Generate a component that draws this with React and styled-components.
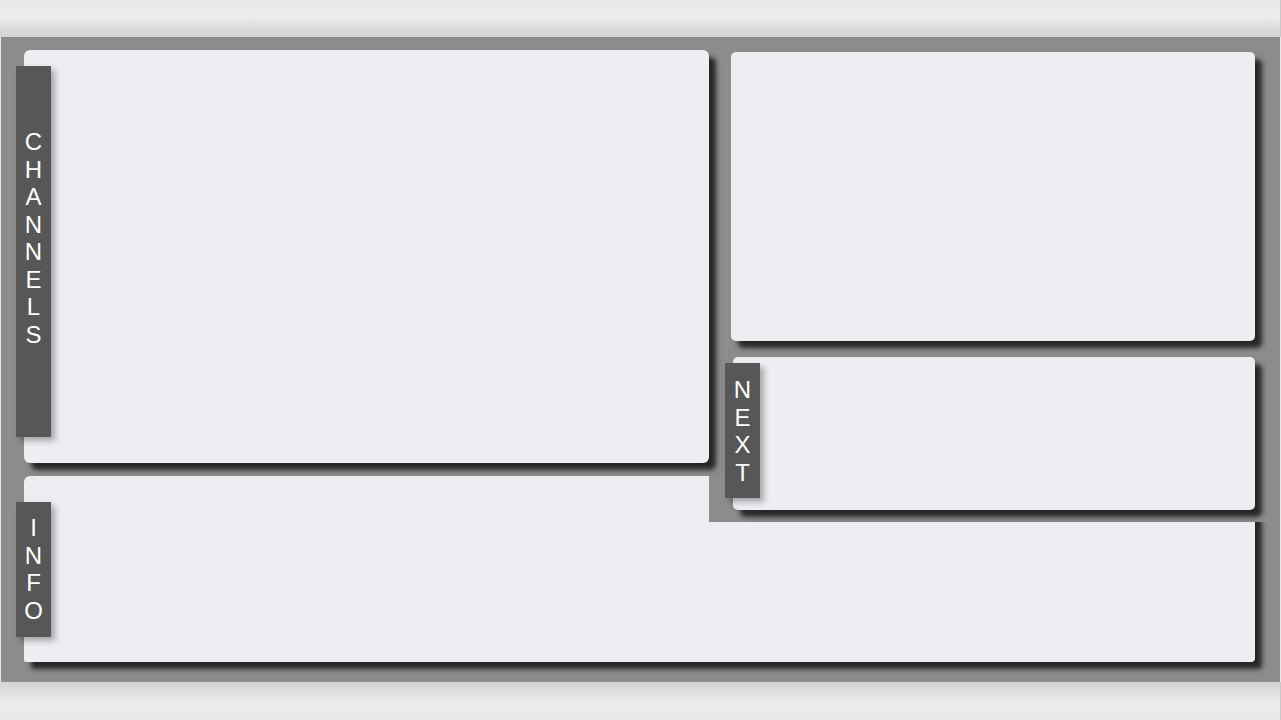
import styled, { createGlobalStyle } from 'styled-components';

const GlobalStyle = createGlobalStyle`
  html, body {
    margin: 0;
    padding: 0;
    background: #e9e9e9;
    font-family: "Liberation Sans", Arial, sans-serif;
  }
`;

function Label({ text, top, height, pad }) {
  return (
    <Tab $top={top} $height={height} $pad={pad}>
      {text.split('').map((ch, i) => (
        <Letter key={i}>{ch}</Letter>
      ))}
    </Tab>
  );
}

function App() {
  return (
    <Page>
      <GlobalStyle />
      <TopBar />
      <Main>
        <ChannelsPanel>
          <Label text="CHANNELS" top={16} height={371} pad={62} />
        </ChannelsPanel>
        <RightColumn>
          <PreviewPanel />
          <NextPanel>
            <Label text="NEXT" top={6} height={135} pad={13} />
          </NextPanel>
        </RightColumn>
        <InfoPanel>
          <Label text="INFO" top={26} height={135} pad={12} />
        </InfoPanel>
      </Main>
      <BottomBar />
    </Page>
  );
}

export default App;

const Page = styled.div`
  width: 1281px;
  height: 720px;
  display: flex;
  flex-direction: column;
  overflow: hidden;
`;
const TopBar = styled.div`
  height: 37px;
  flex-shrink: 0;
  background: linear-gradient(#e8e8e8, #ececec 45%, #d2d2d2);
  border-right: 1px solid #c8c8c8;
`;
const BottomBar = styled.div`
  height: 38px;
  flex-shrink: 0;
  background: linear-gradient(#d4d4d4, #ebebeb 55%, #e9e9e9);
  border-right: 1px solid #c8c8c8;
`;
const Main = styled.div`
  height: 645px;
  margin: 0 1px;
  padding: 13px 0 0 23px;
  box-sizing: border-box;
  background: #8c8c8c;
  display: grid;
  grid-template-columns: 685px 1fr;
  grid-template-rows: 413px 186px;
  row-gap: 13px;
`;
const Panel = styled.div`
  position: relative;
  background: #eeedf2;
  border-radius: 6px;
  box-shadow: 7px 7px 5px rgba(0, 0, 0, 0.72);
`;
const ChannelsPanel = styled(Panel)`
  grid-column: 1;
  grid-row: 1;
  z-index: 2;
`;
const RightColumn = styled.div`
  grid-column: 2;
  grid-row: 1 / 3;
  align-self: start;
  position: relative;
  z-index: 1;
  background: #8c8c8c;
  padding: 2px 25px 12px 22px;
  display: flex;
  flex-direction: column;
  gap: 16px;
`;
const PreviewPanel = styled(Panel)`
  height: 289px;
  border-radius: 5px;
`;
const NextPanel = styled(Panel)`
  height: 153px;
  margin-left: 2px;
  border-radius: 5px;
`;
const InfoPanel = styled(Panel)`
  grid-column: 1 / 3;
  grid-row: 2;
  margin-right: 25px;
  border-radius: 6px 4px 4px 2px;
  z-index: 0;
`;
const Tab = styled.div`
  position: absolute;
  left: -8px;
  top: ${(p) => p.$top}px;
  width: 35px;
  height: ${(p) => p.$height}px;
  box-sizing: border-box;
  padding-top: ${(p) => p.$pad}px;
  background: #575757;
  box-shadow: 4px 4px 6px rgba(0, 0, 0, 0.3);
  display: flex;
  flex-direction: column;
  align-items: center;
`;
const Letter = styled.span`
  display: block;
  color: #ffffff;
  font-size: 24px;
  line-height: 27.5px;
`;
